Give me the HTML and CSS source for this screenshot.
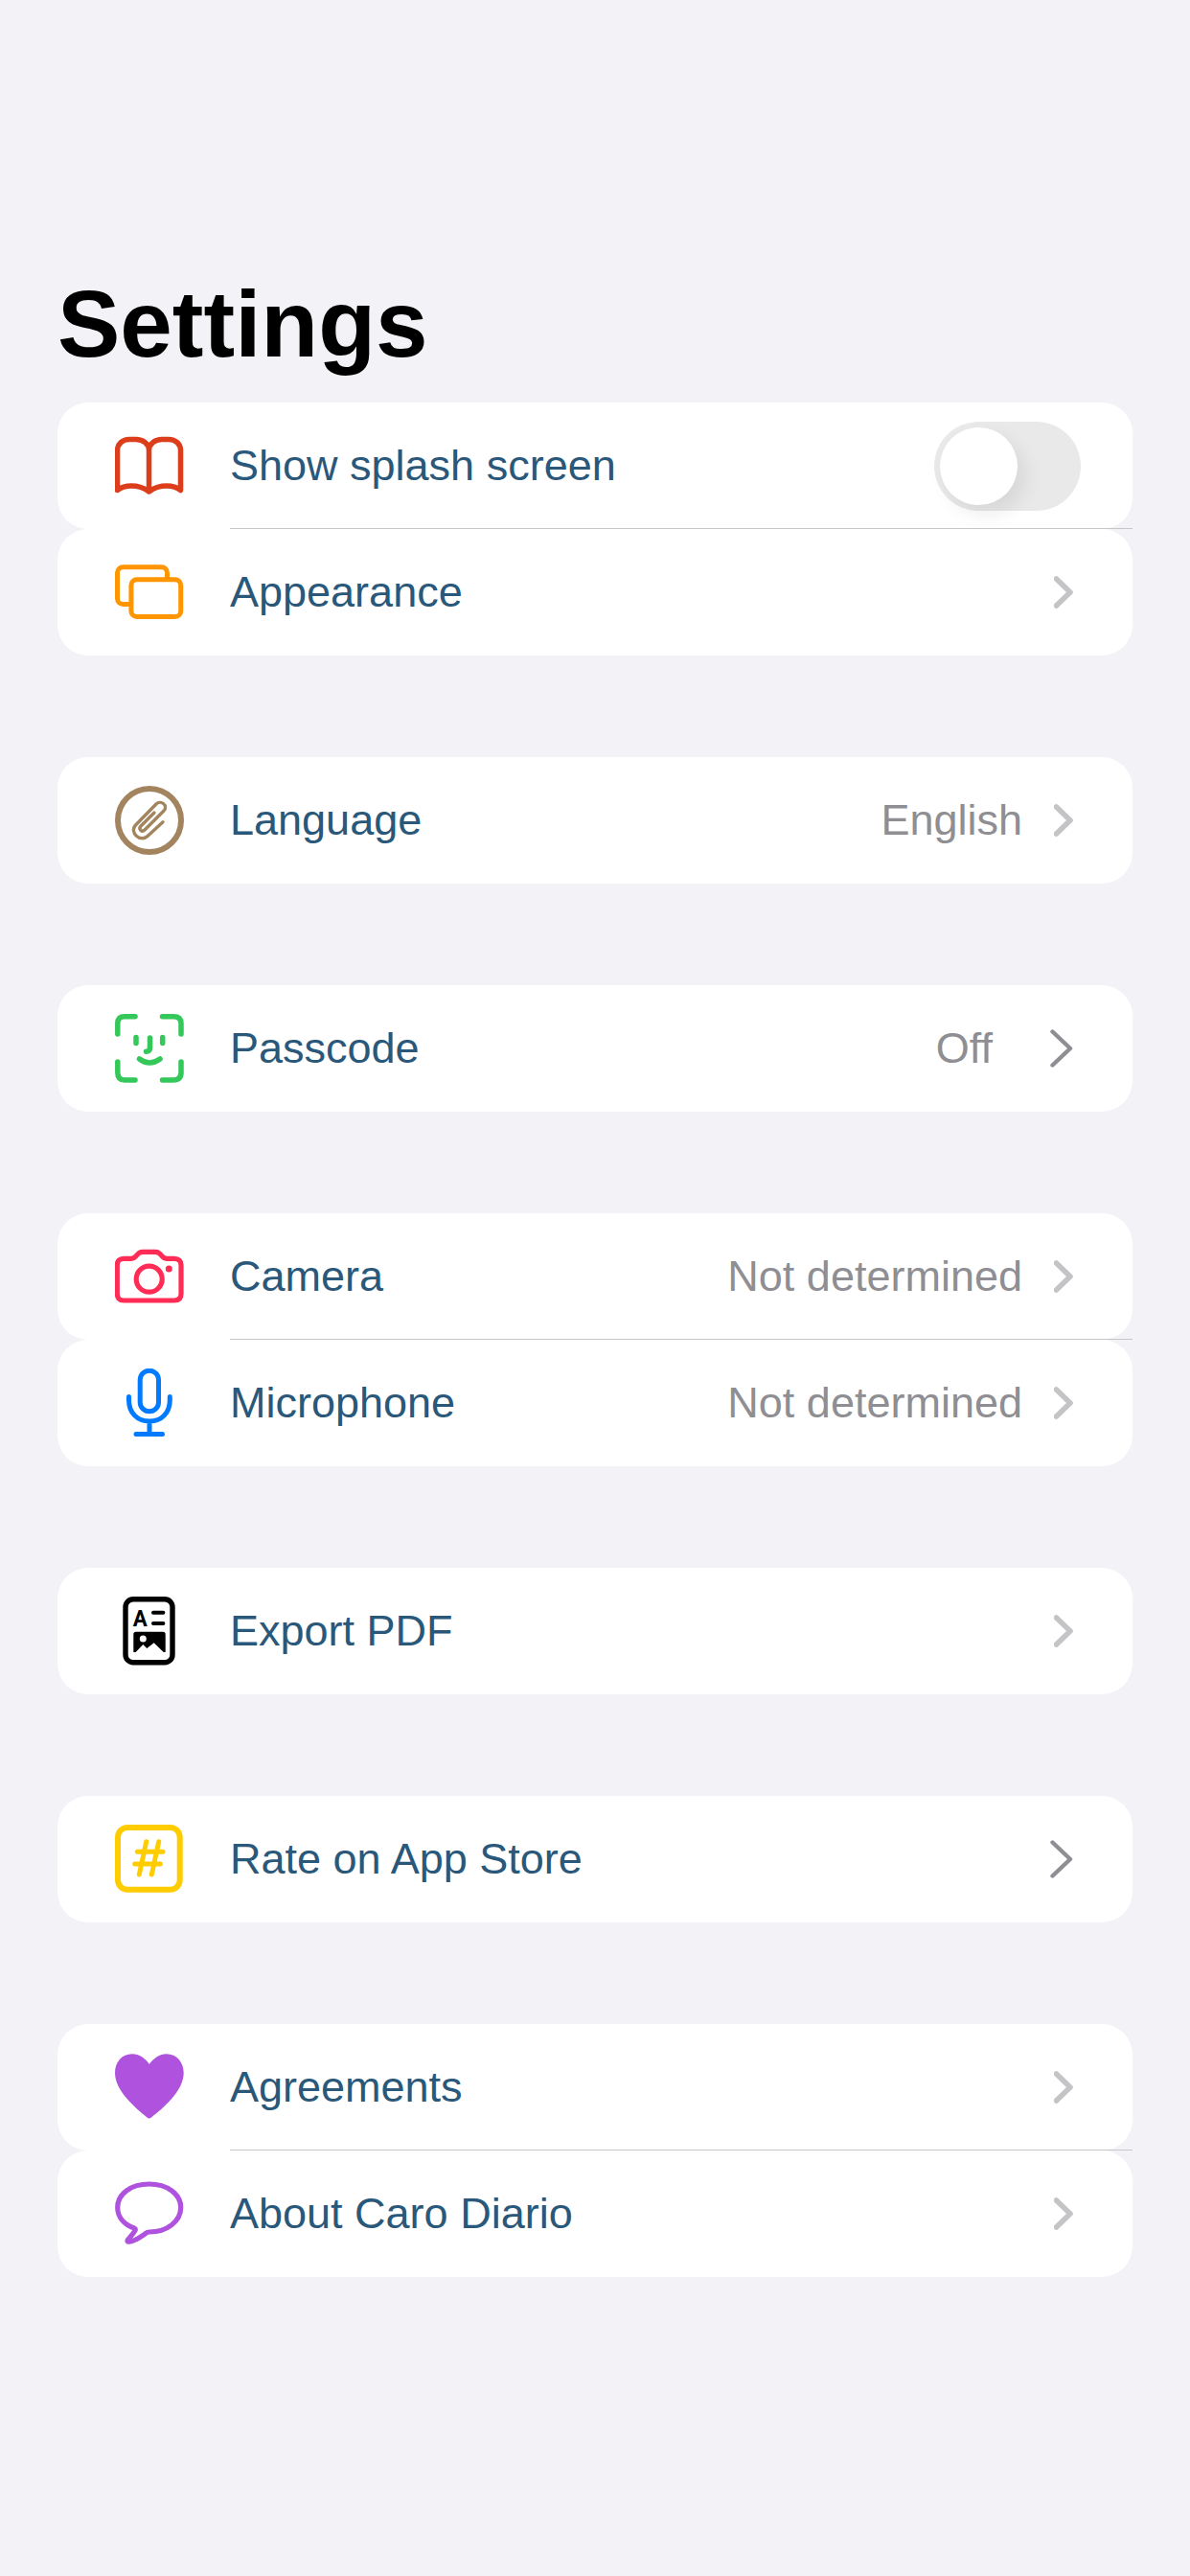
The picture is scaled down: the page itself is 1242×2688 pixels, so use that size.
FILE: index.html
```html
<!DOCTYPE html>
<html>
	<head>
		<meta charset="UTF-8">
		<title>Settings</title>
		<link rel="stylesheet" href="styles.css">
	</head>

	<body>
		<h1>Settings</h1>

		<div class="group">
			<div class="row">
				<svg class="icon book" viewBox="0 0 72 72"><path d="M35.5 63V20C35.5 13 29 8.5 22 8.5H15C8 8.5 2.5 13 2.5 20V61.5C7 58 12 57 17 57C25 57 31 59.5 35.5 63C40 59.5 46 57 54 57C59 57 64 58 68.5 61.5V20C68.5 13 63 8.5 56 8.5H49C42 8.5 35.5 13 35.5 20"/></svg>
				<span class="label">Show splash screen</span>
				<div class="toggle"><div class="knob"></div></div>
			</div>
			<div class="row">
				<svg class="icon appearance" viewBox="0 0 72 72"><rect x="2.5" y="9.8" width="52" height="38.6" rx="6"/><rect x="16.9" y="22.8" width="51.8" height="38.8" rx="6"/></svg>
				<span class="label">Appearance</span>
				<svg class="chevron" viewBox="0 0 20 34"><path d="M2.5 3L17 17L2.5 31"/></svg>
			</div>
		</div>

		<div class="group">
			<div class="row">
				<svg class="icon language" viewBox="0 0 72 72"><circle cx="36" cy="36" r="33"/><path class="thin" d="M50 37.7L34 52.5C26.5 59.5 14.5 48.5 21.5 41L43 19C48 14 56 21 51 26L31 46C28 49 24 45 27 42L41 28"/></svg>
				<span class="label">Language</span>
				<span class="value">English</span>
				<svg class="chevron" viewBox="0 0 20 34"><path d="M2.5 3L17 17L2.5 31"/></svg>
			</div>
		</div>

		<div class="group">
			<div class="row">
				<svg class="icon passcode" viewBox="0 0 72 72"><path d="M2.8 21V10Q2.8 2.8 10 2.8H21M49.5 2.8H61Q69 2.8 69 10V21M69 50V61Q69 69 61 69H49.5M21 69H10Q2.8 69 2.8 61V50M22 24.5V30.5M49.7 24.5V30.5M36.5 25V35C36.5 38 35 39.3 32.5 39.3M25.5 47Q36 55 47 47"/></svg>
				<span class="label">Passcode</span>
				<span class="value">Off</span>
				<svg class="chevron dark" viewBox="0 0 24 40"><path d="M2.5 2.5L21 20L2.5 37.5"/></svg>
			</div>
		</div>

		<div class="group">
			<div class="row">
				<svg class="icon camera" viewBox="0 0 72 72"><path d="M9 17.3H17C20 17.3 21.5 15.5 23 13.5C24.5 11.5 26 10.3 29 10.3H42C45 10.3 46.5 11.5 48 13.5C49.5 15.5 51 17.3 54 17.3H62C66.5 17.3 69 20 69 24V54C69 58.5 66.5 61 62 61H9C4.7 61 2.3 58.5 2.3 54V24C2.3 20 4.7 17.3 9 17.3Z"/><circle cx="35.7" cy="38.7" r="13.5"/><circle class="dot" cx="56.3" cy="28" r="3.5"/></svg>
				<span class="label">Camera</span>
				<span class="value">Not determined</span>
				<svg class="chevron" viewBox="0 0 20 34"><path d="M2.5 3L17 17L2.5 31"/></svg>
			</div>
			<div class="row">
				<svg class="icon microphone" viewBox="0 0 72 72"><rect x="26.2" y="2.2" width="19.3" height="42.6" rx="9.65"/><path d="M14.5 29.5V33C14.5 46 23 55 36 55C49 55 57.3 46 57.3 33V29.5M36 55V68M22 68.4H49.5"/></svg>
				<span class="label">Microphone</span>
				<span class="value">Not determined</span>
				<svg class="chevron" viewBox="0 0 20 34"><path d="M2.5 3L17 17L2.5 31"/></svg>
			</div>
		</div>

		<div class="group">
			<div class="row">
				<svg class="icon export" viewBox="0 0 72 72"><rect x="11" y="2.7" width="49" height="66" rx="8"/><text x="18.8" y="31.2" textLength="15" lengthAdjust="spacingAndGlyphs">A</text><path class="thin" d="M40 16.7H50.4M40 28H50.4"/><path class="solid" d="M19.3 39.5Q19.3 36.7 22 36.7H50Q52.7 36.7 52.7 39.5V58H50.7L40.7 48.3L33.3 54L29.3 50L21.7 58H19.3Z"/><circle class="hole" cx="29.3" cy="44" r="3.5"/></svg>
				<span class="label">Export PDF</span>
				<svg class="chevron" viewBox="0 0 20 34"><path d="M2.5 3L17 17L2.5 31"/></svg>
			</div>
		</div>

		<div class="group">
			<div class="row">
				<svg class="icon rate" viewBox="0 0 72 72"><rect x="3" y="3" width="64.7" height="64.7" rx="10"/><path class="thin" d="M32.7 17.7L25.3 52M45.7 17.7L38.3 52M23.3 28.3H50M20.7 41H47.3"/></svg>
				<span class="label">Rate on App Store</span>
				<svg class="chevron dark" viewBox="0 0 24 40"><path d="M2.5 2.5L21 20L2.5 37.5"/></svg>
			</div>
		</div>

		<div class="group">
			<div class="row">
				<svg class="icon agreements" viewBox="0 0 72 72"><path d="M35.8 12C32 6 25 1.3 18 1.3C7 1.3 0 10 0 21C0 40 22 58 33.5 67.5C35 68.9 36.5 68.9 38 67.5C50 58 71.7 40 71.7 21C71.7 10 64.5 1.3 53.7 1.3C46.7 1.3 40 6 35.8 12Z"/></svg>
				<span class="label">Agreements</span>
				<svg class="chevron" viewBox="0 0 20 34"><path d="M2.5 3L17 17L2.5 31"/></svg>
			</div>
			<div class="row">
				<svg class="icon about" viewBox="0 0 72 72"><path d="M35.7 5C17 5 2.7 15 2.7 29.5C2.7 39 9 47 20 51C21 51.5 21.5 52.5 21 53.5C19 57 16 60 13.5 63C12.5 64.5 13 65.5 15 65.2C21 64.5 27 60 32 56.5C33 55.5 34 55 36 55C54 55 68.7 44 68.7 29.5C68.7 15 54 5 35.7 5Z"/></svg>
				<span class="label">About Caro Diario</span>
				<svg class="chevron" viewBox="0 0 20 34"><path d="M2.5 3L17 17L2.5 31"/></svg>
			</div>
		</div>
	</body>
</html>
```

FILE: styles.css
```css
html, body, h1 {
	margin: 0;
	padding: 0;
}
html {
	background: #F2F2F7;
}
body {
	padding: 283px 60px 0 60px;
	font-family: "Liberation Sans", Arial, sans-serif;
}
h1 {
	margin-bottom: 27px;
	font-size: 98px;
	line-height: 110px;
	font-weight: bold;
	color: #000000;
}
.group {
	margin-bottom: 106px;
}
.row {
	position: relative;
	display: flex;
	align-items: center;
	height: 132px;
	padding: 0 54px 0 60px;
	border-radius: 32px;
	background: #FFFFFF;
}
/* hairline hangs over the joint between two rows of a group */
.row + .row::before {
	content: "";
	position: absolute;
	top: -1px;
	left: 180px;
	right: 0;
	height: 1px;
	background: #C6C6C8;
}
.label {
	margin-left: 48px;
	font-size: 45px;
	color: #2A587A;
}
.value {
	margin-left: auto;
	font-size: 45px;
	color: #8E8E93;
}
.toggle {
	display: flex;
	align-items: center;
	width: 153px;
	height: 93px;
	margin-left: auto;
	padding-left: 6px;
	box-sizing: border-box;
	border-radius: 47px;
	background: #E9E9EA;
}
.knob {
	width: 81px;
	height: 81px;
	border-radius: 50%;
	background: #FFFFFF;
	box-shadow: 8px 10px 20px rgba(0, 0, 0, 0.08);
}

.icon {
	flex: none;
	width: 72px;
	height: 72px;
	fill: none;
	stroke-width: 5.5;
	stroke-linecap: round;
	stroke-linejoin: round;
}
.book { stroke: #DC3E1C; }
.appearance { stroke: #FF9500; stroke-width: 5; }
.appearance rect { fill: #FFFFFF; }
.language { stroke: #A2845E; stroke-width: 6; }
.language .thin { stroke-width: 3.3; }
.passcode { stroke: #34C759; }
.camera { stroke: #FF2D55; stroke-width: 5.2; }
.camera .dot { fill: #FF2D55; stroke: none; }
.microphone { stroke: #007AFF; stroke-width: 5; }
.export { stroke: #000000; stroke-width: 5.4; }
.export text {
	fill: #000000;
	stroke: none;
	font-family: Roboto, "Liberation Sans", sans-serif;
	font-size: 24px;
	font-weight: bold;
}
.export .thin { stroke-width: 4; }
.export .solid { fill: #000000; stroke: none; }
.export .hole { fill: #FFFFFF; stroke: none; }
.rate { stroke: #FFCC00; stroke-width: 6; }
.rate .thin { stroke-width: 5; }
.agreements { fill: #AF52DE; stroke: none; }
.about { stroke: #AF52DE; stroke-width: 5.2; }

.chevron {
	flex: none;
	width: 20px;
	height: 34px;
	margin-left: auto;
	margin-right: 8px;
	fill: none;
	stroke: #C4C4C6;
	stroke-width: 5.6;
	stroke-linecap: round;
	stroke-linejoin: round;
}
.value + .chevron {
	margin-left: 33px;
}
.chevron.dark {
	width: 24px;
	height: 40px;
	stroke: #8E8E93;
	stroke-width: 4.4;
}
.value + .chevron.dark {
	margin-left: 60px;
}
```
